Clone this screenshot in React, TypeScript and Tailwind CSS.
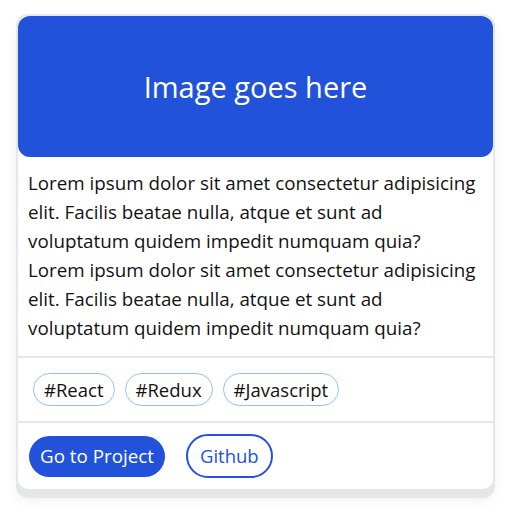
import React from "react";

const tags = ["#React", "#Redux", "#Javascript"];

const lorem =
  "Lorem ipsum dolor sit amet consectetur adipisicing elit. Facilis beatae nulla, atque et sunt ad voluptatum quidem impedit numquam quia?";

const App: React.FC = () => {
  return (
    <div
      className="min-h-screen bg-white pl-4 pt-[14px]"
      style={{ fontFamily: '"Open Sans", "Noto Sans", sans-serif' }}
    >
      <div className="w-[479px] rounded-xl border-2 border-[#e5e7eb] bg-white shadow-[0_7px_0_#e4e7e7,0_9px_14px_rgba(0,0,0,0.06)]">
        <div className="flex h-[141px] items-center justify-center rounded-xl bg-[#2152d9]">
          <span className="text-[29px] text-white">Image goes here</span>
        </div>

        <p className="px-2.5 pb-[13px] pt-3 text-[18.8px] leading-[29px] text-[#121212]">
          <span className="block">{lorem}</span>
          <span className="block">{lorem}</span>
        </p>

        <div className="flex gap-2.5 border-y-2 border-[#e5e7eb] px-[15px] py-[15px]">
          {tags.map((tag) => (
            <span
              key={tag}
              className="flex h-[33px] items-center rounded-full border border-[#93bff2] px-2.5 text-[18.5px] text-[#121212]"
            >
              {tag}
            </span>
          ))}
        </div>

        <div className="flex items-center gap-[21px] px-[11px] pb-[11px] pt-[11px]">
          <button className="h-[41px] rounded-full bg-[#2152d9] px-[11px] text-[18.8px] text-white">
            Go to Project
          </button>
          <button className="h-11 rounded-full border-2 border-[#2152d9] px-3 text-[18.5px] text-[#2152d9]">
            Github
          </button>
        </div>
      </div>
    </div>
  );
};

export default App;
